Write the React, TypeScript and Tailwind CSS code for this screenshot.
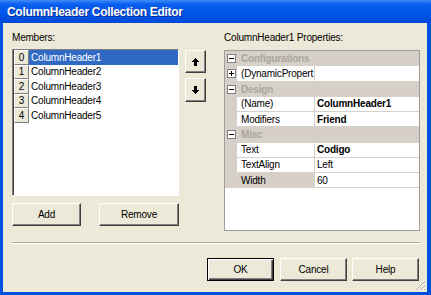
import React from "react";

const raised =
  "bg-[#ECE9D8] border border-t-white border-l-white border-r-[#404040] border-b-[#404040] shadow-[inset_-1px_-1px_0_#808080]";

function Btn({ label, w, def }: { label: string; w: string; def?: boolean }) {
  return (
    <div
      className={
        "h-[23px] flex items-center justify-center text-[10px] " +
        w +
        " " +
        (def
          ? "bg-[#ECE9D8] border border-black shadow-[inset_1px_1px_0_#ffffff,inset_-1px_-1px_0_#404040,inset_-2px_-2px_0_#808080]"
          : raised)
      }
    >
      {label}
    </div>
  );
}

function Box({ plus }: { plus?: boolean }) {
  return (
    <span className="relative block w-[9px] h-[9px] border border-[#808080] bg-white">
      <span className="absolute left-[1px] top-[3px] w-[5px] h-[1px] bg-black" />
      {plus && <span className="absolute left-[3px] top-[1px] w-[1px] h-[5px] bg-black" />}
    </span>
  );
}

type Row =
  | { cat: string }
  | { name: string; value: string; bold?: boolean; plus?: boolean; sel?: boolean };

const rows: Row[] = [
  { cat: "Configurations" },
  { name: "(DynamicPropert", value: "", plus: true },
  { cat: "Design" },
  { name: "(Name)", value: "ColumnHeader1", bold: true },
  { name: "Modifiers", value: "Friend", bold: true },
  { cat: "Misc" },
  { name: "Text", value: "Codigo", bold: true },
  { name: "TextAlign", value: "Left" },
  { name: "Width", value: "60", sel: true },
];

export default function App() {
  return (
    <div className="w-[431px] h-[295px] flex flex-col bg-[#0050DE] font-['Liberation_Sans',Arial,sans-serif] text-black overflow-hidden tracking-[-0.2px]">
      <div className="h-[23px] shrink-0 flex items-center pl-[7px] bg-[linear-gradient(to_bottom,#3D8DF9_0%,#0B5FEF_18%,#0055E8_60%,#0049D8_100%)]">
        <span className="text-white font-bold text-[12px] tracking-[-0.3px] [text-shadow:1px_1px_0_#0A2C96]">
          ColumnHeader Collection Editor
        </span>
      </div>
      <div className="flex-1 ml-[3px] mr-[4px] mb-[3px] bg-[#ECE9D8] relative pl-[9px] pt-[8px] text-[10px]">
        <div className="flex h-[200px]">
          <div className="w-[167px] flex flex-col">
            <div className="h-[13px] leading-[13px]">Members:</div>
            <div className="mt-[5px] h-[147px] bg-white border border-t-[#808080] border-l-[#808080] border-r-white border-b-white shadow-[inset_1px_1px_0_#404040] pl-[1px]">
              {["ColumnHeader1", "ColumnHeader2", "ColumnHeader3", "ColumnHeader4", "ColumnHeader5"].map(
                (t, i) => (
                  <div key={t} className="flex h-[14.5px]">
                    <div className="w-[15px] h-full flex items-center justify-center bg-[#ECE9D8] border border-t-white border-l-white border-r-[#808080] border-b-[#808080] text-[10px]">
                      {i}
                    </div>
                    <div
                      className={
                        "flex-1 h-full flex items-center pl-[2px] " +
                        (i === 0 ? "bg-[#316AC5] text-white" : "")
                      }
                    >
                      {t}
                    </div>
                  </div>
                )
              )}
            </div>
            <div className="mt-[7px] flex justify-between">
              <Btn label="Add" w="w-[69px]" />
              <Btn label="Remove" w="w-[80px]" />
            </div>
          </div>
          <div className="ml-[6px] w-[21px] pt-[19px] flex flex-col">
            <div className={"h-[23px] flex items-center justify-center " + raised}>
              <svg width="7" height="8" viewBox="0 0 7 8" shapeRendering="crispEdges">
                <polygon points="3.5,0 7,4 5,4 5,8 2,8 2,4 0,4" fill="#000" />
              </svg>
            </div>
            <div className={"mt-[5px] h-[24px] flex items-center justify-center " + raised}>
              <svg width="7" height="8" viewBox="0 0 7 8" shapeRendering="crispEdges">
                <polygon points="2,0 5,0 5,4 7,4 3.5,8 0,4 2,4" fill="#000" />
              </svg>
            </div>
          </div>
          <div className="ml-[18px] w-[196px] flex flex-col">
            <div className="h-[13px] leading-[13px]">ColumnHeader1 Properties:</div>
            <div className="mt-[6px] h-[181px] border border-[#9D9D9D] bg-white flex flex-col">
              {rows.map((r, i) =>
                "cat" in r ? (
                  <div key={i} className="h-[15.25px] shrink-0 flex items-center bg-[#D6D0C8]">
                    <div className="w-[12px] flex justify-center">
                      <Box />
                    </div>
                    <span className="pl-[4px] font-bold text-[#AAA59E]">{r.cat}</span>
                  </div>
                ) : (
                  <div key={i} className="h-[15.25px] shrink-0 flex bg-[#D6D0C8]">
                    <div className="w-[12px] h-[14.25px] flex items-center justify-center">
                      {r.plus && <Box plus />}
                    </div>
                    <div
                      className={
                        "w-[77px] h-[14.25px] flex items-center pl-[4px] whitespace-nowrap " +
                        (r.sel ? "bg-[#D6D0C8]" : "bg-white")
                      }
                    >
                      {r.name}
                    </div>
                    <div
                      className={
                        "ml-[1px] flex-1 h-[14.25px] flex items-center pl-[2px] bg-white " +
                        (r.bold ? "font-bold" : "")
                      }
                    >
                      {r.value}
                    </div>
                  </div>
                )
              )}
            </div>
          </div>
        </div>
        <div className="mt-[11px] w-[408px] h-[2px] border-t border-t-[#ACA899] border-b border-b-white" />
        <div className="mt-[14px] flex justify-end pr-[8px]">
          <Btn label="OK" w="w-[67px] mr-[6px]" def />
          <Btn label="Cancel" w="w-[67px] mr-[5px]" />
          <Btn label="Help" w="w-[67px]" />
        </div>
        <svg
          className="absolute right-[1px] bottom-[1px]"
          width="12"
          height="12"
          viewBox="0 0 12 12"
          shapeRendering="crispEdges"
        >
          <line x1="11" y1="1" x2="1" y2="11" stroke="#ffffff" />
          <line x1="11" y1="2" x2="2" y2="11" stroke="#ACA899" />
          <line x1="11" y1="5" x2="5" y2="11" stroke="#ffffff" />
          <line x1="11" y1="6" x2="6" y2="11" stroke="#ACA899" />
          <line x1="11" y1="9" x2="9" y2="11" stroke="#ffffff" />
          <line x1="11" y1="10" x2="10" y2="11" stroke="#ACA899" />
        </svg>
      </div>
    </div>
  );
}
